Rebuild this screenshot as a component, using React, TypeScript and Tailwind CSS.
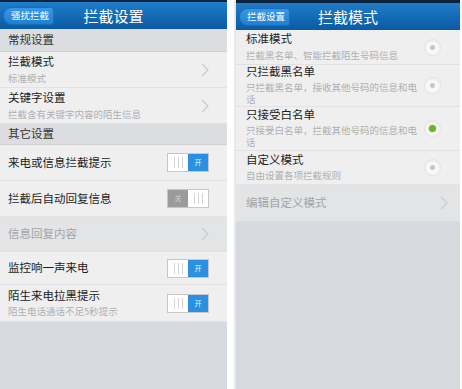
import React from 'react'

const font = { fontFamily: '"Noto Sans CJK SC", "Noto Sans", sans-serif' }

const Chevron = () => (
  <svg width="8" height="14" viewBox="0 0 8 14" className="shrink-0">
    <polyline points="1,1 7,7 1,13" fill="none" stroke="#c9cacc" strokeWidth="1.2" />
  </svg>
)

const Toggle = ({ on }: { on: boolean }) => {
  const lines = (
    <div className="flex-1 h-full bg-white flex items-center justify-center gap-[3px]">
      <div className="w-px h-[11px] bg-[#d4d4d4]" />
      <div className="w-px h-[11px] bg-[#d4d4d4]" />
      <div className="w-px h-[11px] bg-[#d4d4d4]" />
    </div>
  )
  return (
    <div className="w-[42px] h-[19px] border border-[#c4c6c8] flex overflow-hidden shrink-0">
      {on ? (
        <>
          {lines}
          <div className="flex-1 h-full bg-[#2b90e2] text-[#e6f2fc] text-[7px] leading-none flex items-center justify-center">
            开
          </div>
        </>
      ) : (
        <>
          <div className="flex-1 h-full bg-[#9b9b9b] text-[#d0d0d0] text-[7px] leading-none flex items-center justify-center">
            关
          </div>
          {lines}
        </>
      )}
    </div>
  )
}

const Radio = ({ checked }: { checked?: boolean }) => (
  <div className="w-[17px] h-[17px] rounded-full bg-[#f8f8f8] border border-[#e3e3e3] flex items-center justify-center shrink-0 shadow-[inset_0_1px_2px_rgba(0,0,0,0.07)]">
    {checked ? (
      <div className="w-[7px] h-[7px] rounded-full bg-[#6cb52a] shadow-[0_0_2px_#9fd66a]" />
    ) : (
      <div className="w-[5px] h-[5px] rounded-full bg-[#c6c6c6]" />
    )}
  </div>
)

const Header = ({ back, title, top }: { back: string; title: string; top: string }) => (
  <div className={`bg-gradient-to-b from-[#1f7dc9] to-[#0b5aa3] border-t-[#0a2440] ${top} relative flex items-center justify-center`}>
    <div className="absolute left-[3px] top-1/2 -translate-y-1/2 h-[18px] pl-[7px] pr-[4px] rounded-l-[9px] rounded-r-[3px] bg-gradient-to-b from-[#3898e6] to-[#2080d0] border border-[#1a6fbd] flex items-center text-white text-[9.5px] leading-none">
      {back}
    </div>
    <span className="text-white text-[15px] leading-none">{title}</span>
  </div>
)

const Section = ({ label, h }: { label: string; h: string }) => (
  <div className={`${h} bg-[#dcdde0] border-b border-[#d0d1d4] flex items-center pl-[8px] text-[11.5px] text-[#333] leading-none`}>
    {label}
  </div>
)

const LeftRow = ({
  title,
  sub,
  right,
  h,
  dim,
}: {
  title: string
  sub?: string
  right: React.ReactNode
  h: string
  dim?: boolean
}) => (
  <div
    className={`${h} ${dim ? 'bg-[#e3e4e6]' : 'bg-[#efeff0]'} border-b border-[#e2e2e4] flex items-center pl-[8px] pr-[18px]`}
  >
    <div className="flex-1 flex flex-col">
      <span className={`text-[11.5px] leading-none ${dim ? 'text-[#a2a4a8]' : 'text-[#1c1c1c]'}`}>{title}</span>
      {sub && <span className="text-[9.5px] leading-none text-[#b0b0b0] mt-[6px]">{sub}</span>}
    </div>
    {right}
  </div>
)

const ModeRow = ({
  title,
  sub,
  h,
  checked,
}: {
  title: string
  sub: string
  h: string
  checked?: boolean
}) => (
  <div className={`${h} bg-[#efeff0] border-b border-[#e2e2e4] flex items-center pl-[10px] pr-[19px]`}>
    <div className="flex-1 flex flex-col">
      <span className="text-[11.5px] leading-none text-[#1c1c1c]">{title}</span>
      <span className="text-[9.5px] leading-[12px] text-[#b0b0b0] mt-[4px] w-[175px]">{sub}</span>
    </div>
    <Radio checked={checked} />
  </div>
)

export default function App() {
  return (
    <div className="w-[462px] h-[389px] bg-white flex overflow-hidden" style={font}>
      <div className="w-[227px] h-full bg-[#d7dade] flex flex-col">
        <Header back="骚扰拦截" title="拦截设置" top="h-[29px] border-t-[2px]" />
        <Section label="常规设置" h="h-[23px]" />
        <LeftRow title="拦截模式" sub="标准模式" right={<Chevron />} h="h-[36px]" />
        <LeftRow title="关键字设置" sub="拦截含有关键字内容的陌生信息" right={<Chevron />} h="h-[36px]" />
        <Section label="其它设置" h="h-[21px]" />
        <LeftRow title="来电或信息拦截提示" right={<Toggle on />} h="h-[36px]" />
        <LeftRow title="拦截后自动回复信息" right={<Toggle on={false} />} h="h-[36px]" />
        <LeftRow title="信息回复内容" right={<Chevron />} h="h-[35px]" dim />
        <LeftRow title="监控响一声来电" right={<Toggle on />} h="h-[33px]" />
        <LeftRow title="陌生来电拉黑提示" sub="陌生电话通话不足5秒提示" right={<Toggle on />} h="h-[37px]" />
      </div>
      <div className="w-[7px]" />
      <div className="w-[226px] h-full bg-[#d7dade] flex flex-col border-l-[2px] border-l-[#e6e8eb]">
        <Header back="拦截设置" title="拦截模式" top="h-[30px] border-t-[3px]" />
        <ModeRow title="标准模式" sub="拦截黑名单、智能拦截陌生号码信息" h="h-[35px]" />
        <ModeRow title="只拦截黑名单" sub="只拦截黑名单，接收其他号码的信息和电话" h="h-[42px]" />
        <ModeRow title="只接受白名单" sub="只接受白名单，拦截其他号码的信息和电话" h="h-[44px]" checked />
        <ModeRow title="自定义模式" sub="自由设置各项拦截规则" h="h-[34px]" />
        <div className="h-[37px] bg-[#e3e4e6] border-b border-[#dcdde0] flex items-center pl-[10px] pr-[12px]">
          <span className="flex-1 text-[11.5px] leading-none text-[#a2a4a8]">编辑自定义模式</span>
          <Chevron />
        </div>
      </div>
    </div>
  )
}
